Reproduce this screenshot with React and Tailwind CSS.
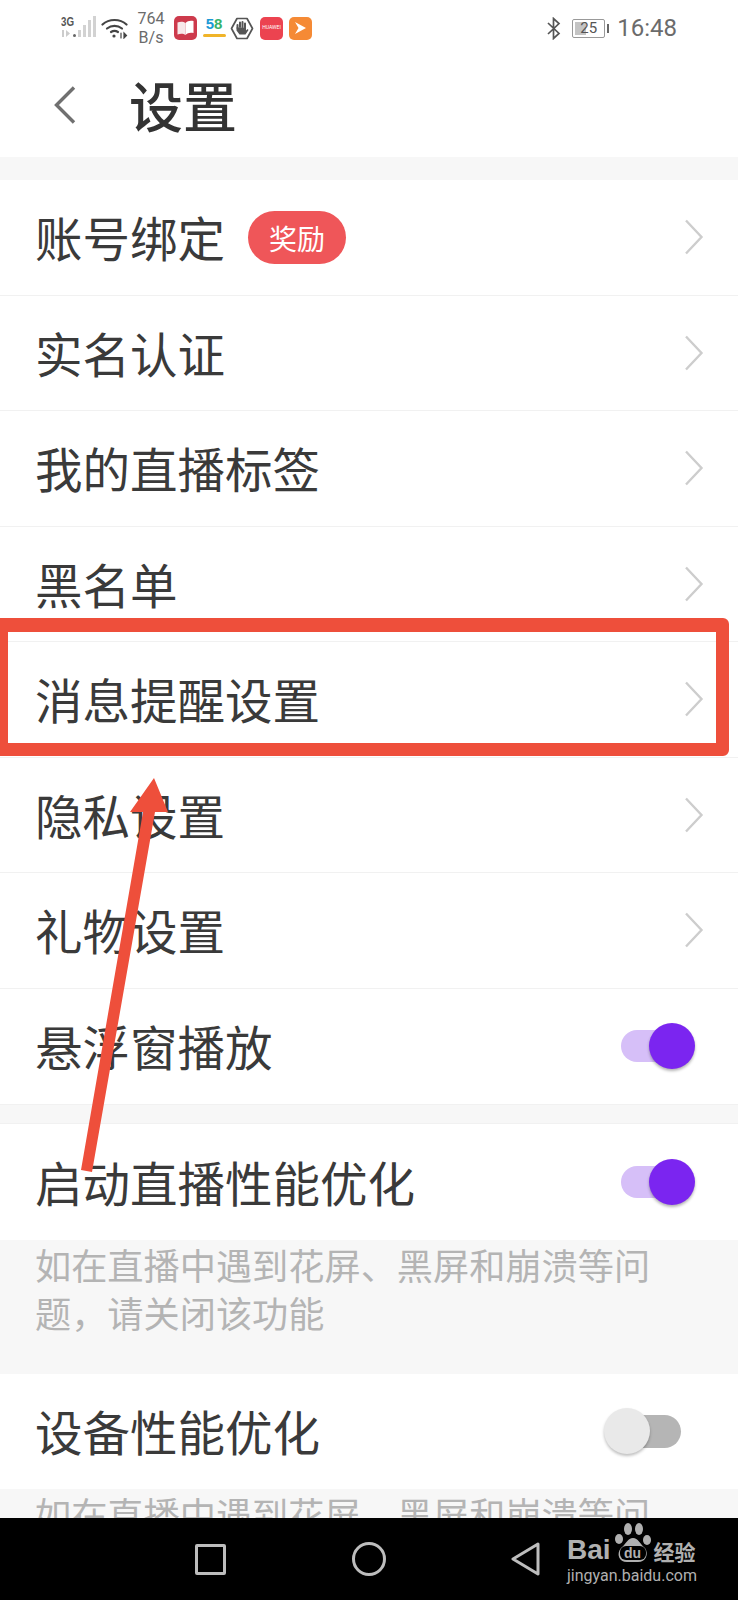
import React from "react";

const FONT = { cjk: "font-['Noto_Sans_CJK_SC','Noto_Sans',sans-serif]" };

const Toggle = ({ on }) =>
  on ? (
    <div className="relative h-[32px] w-[60px] rounded-full bg-[#d6bff8] mr-[-1px]">
      <div className="absolute right-[-14px] top-[-7px] h-[46px] w-[46px] rounded-full bg-[#7b25f0] shadow-[0_2px_3px_rgba(0,0,0,0.3)]"></div>
    </div>
  ) : (
    <div className="relative h-[33px] w-[60px] rounded-full bg-[#b5b5b5] mr-[-1px]">
      <div className="absolute left-[-17px] top-[-7px] h-[46px] w-[46px] rounded-full bg-[#e9e9e9] shadow-[0_2px_3px_rgba(0,0,0,0.25)]"></div>
    </div>
  );

const Chevron = () => (
  <svg width="20" height="36" viewBox="0 0 20 36" fill="none" stroke="#cdcdcd" strokeWidth="2.4">
    <path d="M2 1.5L17.5 18 2 34.5" />
  </svg>
);

const Row = ({ label, badge, toggle, last }) => (
  <div
    className={`flex h-[115.5px] shrink-0 items-center justify-between bg-white pl-[35px] ${
      toggle === undefined ? "pr-[34px]" : "pr-[58px]"
    } ${last ? "" : "border-b border-[#f1f1f1]"}`}
  >
    <div className="flex items-center">
      <span className="text-[47.5px] leading-[60px] text-[#3a3a3a]">{label}</span>
      {badge && (
        <span className="ml-[23px] mt-[1px] flex h-[53px] w-[98px] items-center justify-center rounded-full bg-[#ef5659] text-[28px] text-white">
          {badge}
        </span>
      )}
    </div>
    {toggle === undefined ? <Chevron /> : <Toggle on={toggle} />}
  </div>
);

const Signal = () => (
  <svg width="36" height="24" viewBox="0 0 36 24">
    <text x="0" y="10" fontSize="12.5" fontWeight="700" fill="#555" fontFamily="Liberation Sans" textLength="13" lengthAdjust="spacingAndGlyphs">3G</text>
    <rect x="1" y="14" width="2" height="7" fill="#ccc" />
    <path d="M5 14l4 3.5-4 3.5z" fill="#ccc" />
    <circle cx="13.5" cy="19.5" r="1.5" fill="#666" />
    <rect x="17" y="14" width="3" height="7" fill="#d2d2d2" />
    <rect x="22" y="9" width="3" height="12" fill="#d2d2d2" />
    <rect x="27" y="4" width="3" height="17" fill="#d2d2d2" />
    <rect x="32" y="0" width="3" height="21" fill="#d2d2d2" />
  </svg>
);

const Wifi = () => (
  <svg width="27" height="22" viewBox="0 0 27 22" fill="none" stroke="#444" strokeWidth="2.2" strokeLinecap="round">
    <path d="M1.5 7.5C8 1.5 19 1.5 25.5 7.5" />
    <path d="M6 11.5c4.5-3.5 10.5-3.5 15 0" />
    <path d="M10 15c2-1.3 5-1.3 7 0" />
    <circle cx="13" cy="19" r="1.6" fill="#444" stroke="none" />
    <path d="M20 16v5M23 16l2.5 2.5L23 21z" strokeWidth="1.2" fill="#444" />
  </svg>
);

const Hand = () => (
  <svg width="24" height="23" viewBox="0 0 24 23">
    <path d="M7 1.5h10l5.5 10-5.5 10H7l-5.5-10z" fill="none" stroke="#555" strokeWidth="1.7" strokeLinejoin="round" />
    <path d="M7.5 11V8M10 10V5.5M12.5 10V5M15 10.5V6.5" stroke="#555" strokeWidth="2" strokeLinecap="round" />
    <path d="M6.5 10.5h9.5v3l1.5-1.5 1 1-3 4.5H9.5l-3-4z" fill="#555" />
  </svg>
);

const Book = () => (
  <svg width="23" height="24" viewBox="0 0 23 24">
    <rect width="23" height="24" rx="5" fill="#cd3a4c" />
    <path d="M3.5 6.5c3-1.2 6-1 8 .5v12c-2-1.5-5-1.7-8-.5z" fill="#f7e8ea" />
    <path d="M19.5 5c-3-.7-6-.3-8 2v12c2-2.3 5-2.7 8-2z" fill="#ffffff" />
  </svg>
);

const Logo58 = () => (
  <div className="ml-[5px] flex h-[24px] w-[24px] flex-col items-center">
    <span className="font-['Liberation_Sans'] text-[15px] font-bold leading-[15px]">
      <span className="text-[#1b9ad6]">5</span>
      <span className="text-[#38b36b]">8</span>
    </span>
    <span className="mt-[3px] h-[3px] w-[23px] rounded-full bg-[#f0b429]"></span>
  </div>
);

const Bluetooth = () => (
  <svg width="14" height="23" viewBox="0 0 14 23" fill="none" stroke="#555" strokeWidth="1.7">
    <path d="M1 6l11 10.5-5.5 5V1.5L12 6.5 1 17" />
  </svg>
);

const StatusBar = () => (
  <div className="flex h-[56px] shrink-0 items-center bg-white pl-[61px] pr-[61px] font-['Roboto',sans-serif] text-[#6b6b6b]">
    <Signal />
    <div className="ml-[4px]"><Wifi /></div>
    <div className="ml-[9px] w-[28px] text-center text-[16px] leading-[19px]">
      764
      <br />
      B/s
    </div>
    <div className="ml-[9px]"><Book /></div>
    <Logo58 />
    <div className="ml-[4px]"><Hand /></div>
    <div className="ml-[6px] flex h-[23px] w-[23px] items-center justify-center rounded-[5px] bg-[#ec4350] text-[5px] text-white">
      HUAWEI
    </div>
    <div className="ml-[6px] flex h-[23px] w-[23px] items-center justify-center rounded-[5px] bg-[#f58a35]">
      <svg width="13" height="14" viewBox="0 0 13 14"><path d="M1 1l11 6-11 6 3.5-6z" fill="#fff" /></svg>
    </div>
    <div className="ml-auto"><Bluetooth /></div>
    <div className="relative ml-[11px] flex h-[19px] w-[33px] items-center justify-center rounded-[2px] border border-[#999] text-[15px] text-[#555]">
      <div className="absolute inset-y-[2px] left-[2px] w-[11px] bg-[#c4c4c4]"></div>
      <span className="relative">25</span>
    </div>
    <div className="ml-[2px] h-[9px] w-[2px] bg-[#666]"></div>
    <span className="ml-[8px] text-[24px] leading-none">16:48</span>
  </div>
);

const Header = () => (
  <div className="flex h-[101px] shrink-0 items-center bg-white pb-[4px]">
    <svg width="22" height="38" viewBox="0 0 22 38" fill="none" stroke="#707070" strokeWidth="3.4" className="ml-[54px]">
      <path d="M20 1.5L2.5 19 20 36.5" />
    </svg>
    <h1 className="ml-[53px] text-[54px] font-medium leading-[60px] text-[#333]">设置</h1>
  </div>
);

const Note = ({ children, tall }) => (
  <div className={`shrink-0 bg-[#f7f7f7] pl-[35px] pr-[60px] text-[36.2px] leading-[48px] text-[#b4b4b4] ${tall ? "h-[134px]" : ""}`}>
    {children}
  </div>
);

const NavBar = () => (
  <div className="flex h-[82px] shrink-0 items-center bg-black pl-[195px]">
    <div className="h-[31px] w-[31px] rounded-[2px] border-[3px] border-[#bdbdbd]"></div>
    <div className="ml-[126px] h-[34px] w-[34px] rounded-full border-[3px] border-[#bdbdbd]"></div>
    <svg width="29" height="34" viewBox="0 0 29 34" fill="none" stroke="#bdbdbd" strokeWidth="3" strokeLinejoin="round" className="ml-[125px]">
      <path d="M27 2L2 17l25 15z" />
    </svg>
    <div className="mb-[10px] ml-[27px] w-[132px] text-[#b0b0b0]">
      <div className="flex h-[40px] items-end">
        <span className="font-['Liberation_Sans'] text-[28px] font-bold leading-[26px]">Bai</span>
        <svg width="38" height="40" viewBox="0 0 38 40" className="ml-[3px] shrink-0">
          <ellipse cx="5" cy="16" rx="4" ry="5" fill="#b0b0b0" />
          <ellipse cx="14" cy="6" rx="4" ry="6" fill="#b0b0b0" />
          <ellipse cx="25" cy="6" rx="4" ry="6" fill="#b0b0b0" />
          <ellipse cx="33" cy="17" rx="4" ry="5" fill="#b0b0b0" />
          <path d="M19 15c5 0 7 6 12 10 4 6 1 14-7 14H13c-8 0-11-8-6-14 5-4 7-10 12-10z" fill="#b0b0b0" />
          <rect x="6" y="23" width="26" height="14" rx="6" fill="#000" />
          <text x="10" y="35" fontSize="14" fontWeight="700" fill="#b0b0b0" fontFamily="Liberation Sans">du</text>
        </svg>
        <span className="ml-[2px] text-[21px] font-bold leading-[24px]">经验</span>
      </div>
      <div className="mt-[4px] whitespace-nowrap font-['Roboto'] text-[16px] leading-[18px]">jingyan.baidu.com</div>
    </div>
  </div>
);

export default function App() {
  return (
    <div className={`relative flex h-[1600px] w-[738px] flex-col overflow-hidden bg-white ${FONT.cjk}`}>
      <StatusBar />
      <Header />
      <div className="h-[23px] shrink-0 bg-[#f7f7f7]"></div>

      <div className="flex min-h-0 flex-1 flex-col overflow-hidden">
        <Row label="账号绑定" badge="奖励" />
        <Row label="实名认证" />
        <Row label="我的直播标签" />
        <Row label="黑名单" />
        <Row label="消息提醒设置" />
        <Row label="隐私设置" />
        <Row label="礼物设置" />
        <Row label="悬浮窗播放" toggle={true} last />
        <div className="h-[20px] shrink-0 border-y border-[#f1f1f1] bg-[#f7f7f7]"></div>
        <Row label="启动直播性能优化" toggle={true} last />
        <Note tall>如在直播中遇到花屏、黑屏和崩溃等问题，请关闭该功能</Note>
        <Row label="设备性能优化" toggle={false} last />
        <Note>如在直播中遇到花屏、黑屏和崩溃等问题，请关闭该功能</Note>
      </div>

      <NavBar />

      {/* annotation drawn over the page */}
      <div className="absolute left-[-11px] top-[618px] h-[138px] w-[740px] rounded-[6px] border-b-[13px] border-l-[19px] border-r-[13px] border-t-[14px] border-[#ee4f3b]"></div>
      <svg width="100" height="400" viewBox="0 0 100 400" className="absolute left-[75px] top-[775px]">
        <path d="M79 3L93 37 80 37 17 397 6 395 68 37 55 37z" fill="#ee4f3b" />
      </svg>
    </div>
  );
}
